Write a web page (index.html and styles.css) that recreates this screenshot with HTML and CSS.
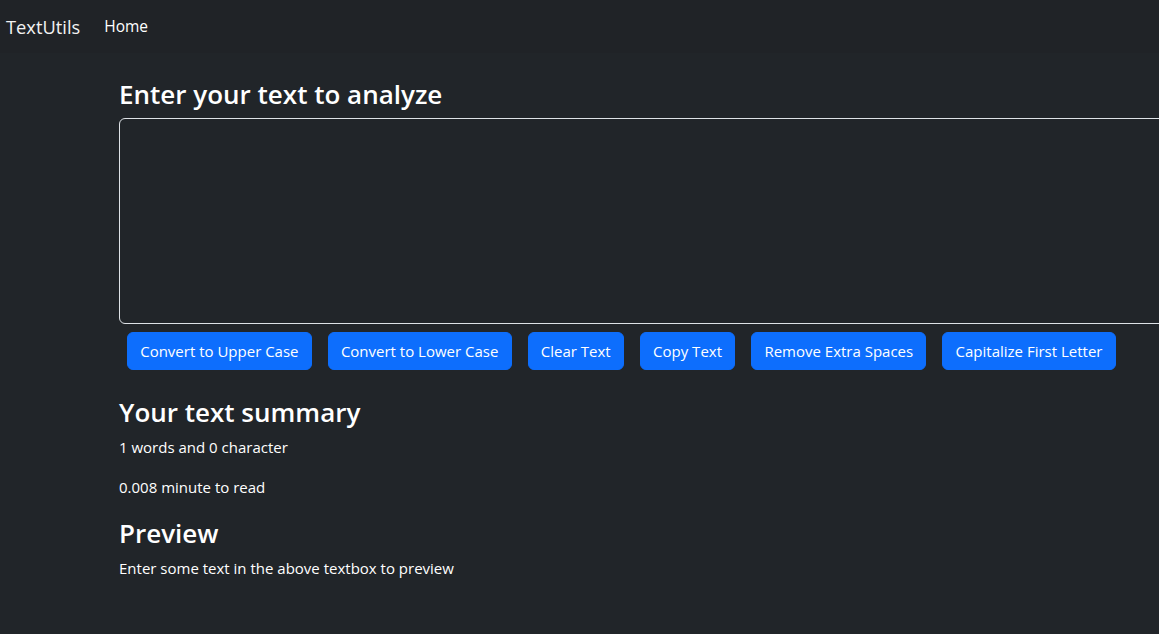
FILE: index.html
```html
<!DOCTYPE html>
<html lang="en">
<head>
<meta charset="utf-8">
<title>TextUtils</title>
<link rel="stylesheet" href="styles.css">
</head>
<body>
<nav class="navbar">
  <a class="brand" href="#">TextUtils</a>
  <a class="nav-link" href="#">Home</a>
</nav>
<main class="container">
  <h1 class="title">Enter your text to analyze</h1>
  <textarea class="textbox" rows="8"></textarea>
  <div class="actions">
    <button class="btn">Convert to Upper Case</button>
    <button class="btn">Convert to Lower Case</button>
    <button class="btn">Clear Text</button>
    <button class="btn">Copy Text</button>
    <button class="btn">Remove Extra Spaces</button>
    <button class="btn">Capitalize First Letter</button>
  </div>
  <h2 class="section">Your text summary</h2>
  <p class="line">1 words and 0 character</p>
  <p class="line">0.008 minute to read</p>
  <h2 class="section">Preview</h2>
  <p class="line">Enter some text in the above textbox to preview</p>
</main>
</body>
</html>
```
FILE: styles.css
```css
html, body {
  margin: 0;
  padding: 0;
}
body {
  background: #212529;
  color: #ffffff;
  font-family: "Open Sans", "Noto Sans", sans-serif;
  font-size: 15px;
  overflow: hidden;
  width: 1159px;
  height: 634px;
}
.navbar {
  background: #202327;
  height: 53px;
  display: flex;
  align-items: center;
  padding-left: 6px;
  box-sizing: border-box;
}
.brand {
  color: #f2f2f2;
  text-decoration: none;
  font-size: 18.3px;
  margin-right: 24px;
  padding-bottom: 1px;
}
.nav-link {
  color: #ffffff;
  text-decoration: none;
  font-size: 15.5px;
  padding-bottom: 1px;
}
.container {
  padding: 0 0 0 119px;
  display: flex;
  flex-direction: column;
  align-items: flex-start;
}
.title {
  font-size: 26px;
  font-weight: 600;
  line-height: 34px;
  margin: 24px 0 7px 0;
}
.textbox {
  width: 1100px;
  height: 206px;
  box-sizing: border-box;
  background: #212529;
  border: 1px solid #dee2e6;
  border-radius: 6px;
  margin: 0;
  resize: none;
  color: #fff;
}
.actions {
  display: flex;
  gap: 16px;
  margin: 8px 0 0 8px;
}
.btn {
  background: #0d6efd;
  color: #fff;
  border: 1px solid #0d6efd;
  border-radius: 6px;
  height: 38px;
  padding: 0 12.2px;
  font-family: inherit;
  font-size: 15px;
}
.section {
  font-size: 26px;
  font-weight: 600;
  line-height: 34px;
  margin: 25px 0 0 0;
}
.line {
  margin: 16px 0 0 0;
  line-height: 24px;
}
.section + .line {
  margin-top: 6px;
}
.line + .section {
  margin-top: 17px;
}
```
